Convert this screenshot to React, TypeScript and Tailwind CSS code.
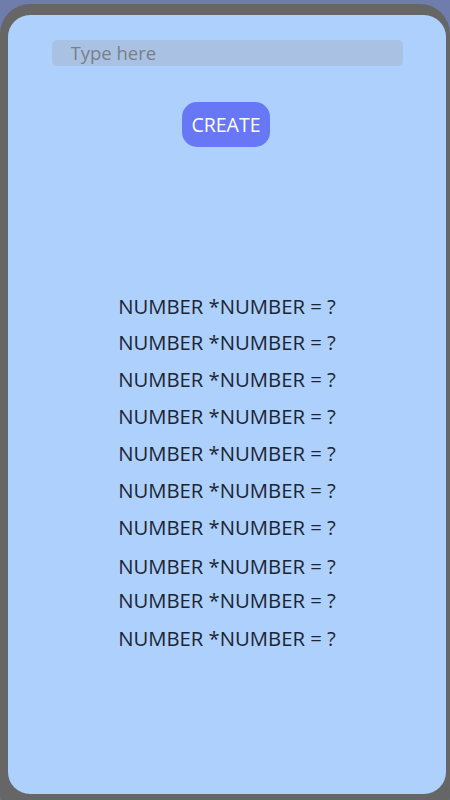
const rows = [
  "mt-0",
  "mt-[16px]",
  "mt-[17px]",
  "mt-[17px]",
  "mt-[17px]",
  "mt-[17px]",
  "mt-[17px]",
  "mt-[19px]",
  "mt-[14px]",
  "mt-[18px]",
];

const App = () => {
  return (
    <div className="h-[800px] w-[450px] overflow-hidden bg-[#6f7dac] pt-[4px] font-['Open_Sans',sans-serif]">
      <div className="h-[820px] w-full rounded-[30px] bg-[#666666] pl-[8px] pr-[4px] pt-[11px]">
        <div className="flex h-[779px] flex-col items-center rounded-[22px] bg-[#aed0fc]">
          <input
            type="text"
            placeholder="Type here"
            className="mt-[25px] h-[26px] w-[351px] shrink-0 rounded-[5px] bg-[#a9c2e3] px-[19px] text-[18.5px] text-[#444] placeholder:text-[#7a7f88] outline-none"
          />
          <button className="mt-[36px] h-[45px] w-[88px] shrink-0 -translate-x-[1px] rounded-[15px] bg-[#6877f6] text-[19.5px] text-white">
            CREATE
          </button>
          <div className="mt-[149px] flex shrink-0 flex-col items-center">
            {rows.map((m, i) => (
              <p key={i} className={`${m} h-[20px] text-[20.3px] leading-[20px] text-[#1b2536]`}>
                NUMBER *NUMBER = ?
              </p>
            ))}
          </div>
        </div>
      </div>
    </div>
  );
};

export default App;
